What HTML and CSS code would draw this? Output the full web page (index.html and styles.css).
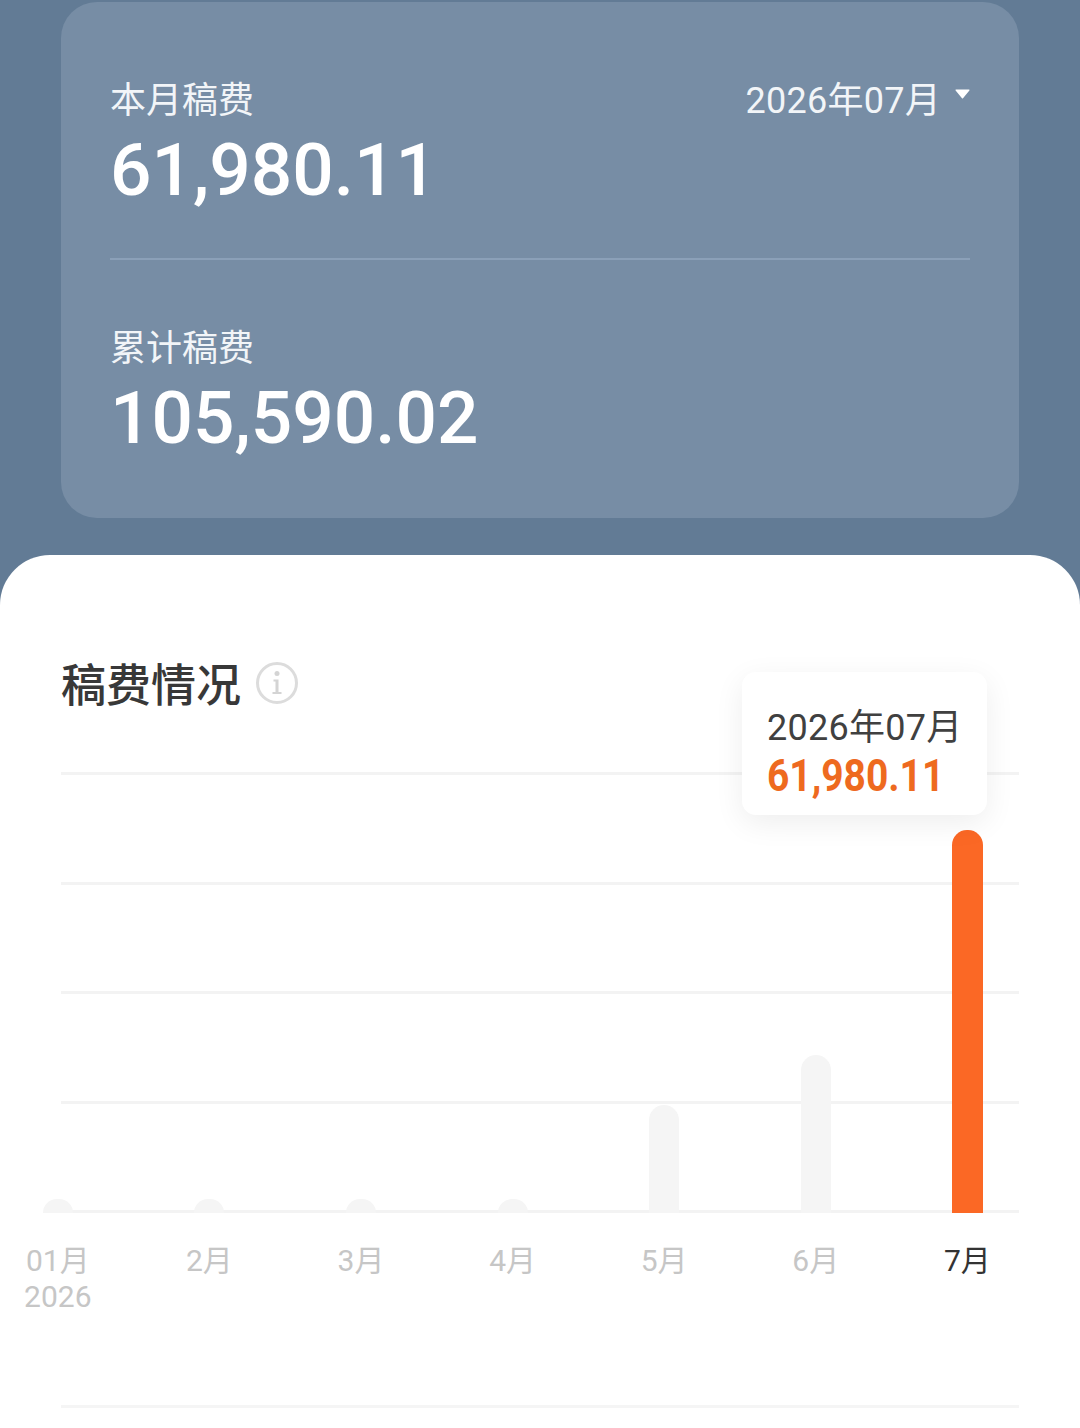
FILE: index.html
```html
<!DOCTYPE html>
<html lang="zh-CN">
<head>
  <meta charset="UTF-8" />
  <meta name="viewport" content="width=device-width, initial-scale=1.0"/>
  <title>稿费情况</title>
  <link rel="stylesheet" href="styles.css">
</head>
<body>

  <section class="summary">
    <div class="summary-top">
      <div>
        <div class="summary-label">本月稿费</div>
        <div class="summary-value">61,980.11</div>
      </div>
      <div class="month-picker">
        <span>2026年07月</span>
        <svg class="caret" width="15" height="10" viewBox="0 0 15 10"><path d="M1.100 0.500H13.900a.6.6 0 0 1 .5 1L8 9.200a.6.6 0 0 1-1 0L.6 1.500a.6.6 0 0 1 .5-1z" fill="#fff"/></svg>
      </div>
    </div>
    <div class="summary-divider"></div>
    <div class="summary-label">累计稿费</div>
    <div class="summary-value">105,590.02</div>
  </section>

  <main class="sheet">
    <div class="sheet-title">
      <h2>稿费情况</h2>
      <svg class="info" width="44" height="44" viewBox="0 0 44 44">
        <circle cx="22" cy="22" r="19.500" fill="none" stroke="#dcdcdc" stroke-width="3"/>
        <circle cx="22" cy="12.500" r="2.500" fill="#d4d4d4"/>
        <path d="M18.500 18.500H23.500V31H26.500V33H17.500V31H20.500V20.500H18.500z" fill="#d4d4d4"/>
      </svg>
    </div>

    <div class="chart">
      <div class="grid-lines">
        <i></i><i></i><i></i><i></i><i></i>
      </div>
      <div class="bars">
        <div class="bar" style="height: 14px"></div>
        <div class="bar" style="height: 14px"></div>
        <div class="bar" style="height: 14px"></div>
        <div class="bar" style="height: 14px"></div>
        <div class="bar" style="height: 108px"></div>
        <div class="bar" style="height: 158px"></div>
        <div class="bar bar-active" style="height: 383px"></div>
      </div>
      <div class="tooltip">
        <div class="tooltip-date">2026年07月</div>
        <div class="tooltip-value">61,980.11</div>
      </div>
    </div>

    <div class="axis">
      <div>01月<br>2026</div>
      <div>2月</div>
      <div>3月</div>
      <div>4月</div>
      <div>5月</div>
      <div>6月</div>
      <div class="axis-active">7月</div>
    </div>

    <div class="sheet-rule"></div>
  </main>

</body>
</html>
```

FILE: styles.css
```css
html, body {
  margin: 0;
  padding: 0;
}

body {
  width: 1080px;
  height: 1428px;
  overflow: hidden;
  background-color: #627b95;
  font-family: Roboto, "Noto Sans CJK SC", sans-serif;
}

.summary {
  height: 516px;
  box-sizing: border-box;
  margin: 2px 61px 0;
  padding: 74px 49px 0;
  background-color: #778da5;
  border-radius: 36px;
  color: #fff;
}

.summary-top {
  display: flex;
  justify-content: space-between;
  align-items: flex-start;
}

.summary-label {
  font-size: 36px;
  line-height: 50px;
  color: #f2f5f8;
}

.summary-value {
  font-size: 73px;
  font-weight: 500;
  line-height: 88px;
}

.month-picker {
  display: flex;
  align-items: flex-start;
  gap: 14px;
  font-size: 36px;
  line-height: 50px;
  letter-spacing: 0.250px;
  color: #f2f5f8;
}

.caret {
  margin-top: 13px;
}

.summary-divider {
  height: 2px;
  margin: 44px 0 64px;
  background-color: #8ba0b8;
}

.sheet {
  height: 873px;
  box-sizing: border-box;
  margin-top: 37px;
  padding: 102px 61px 0;
  background-color: #fff;
  border-radius: 50px 50px 0 0;
}

.sheet-title {
  display: flex;
  align-items: center;
  gap: 14px;
  height: 60px;
}

.sheet-title h2 {
  margin: 0;
  font-size: 45px;
  font-weight: 500;
  line-height: 60px;
  color: #383838;
}

.info {
  margin-top: -8px;
}

.chart {
  position: relative;
  height: 441px;
  margin-top: 55px;
}

.grid-lines {
  position: absolute;
  inset: 0;
  display: flex;
  flex-direction: column;
  justify-content: space-between;
}

.grid-lines i {
  display: block;
  height: 3px;
  background-color: #f3f3f3;
}

.bars,
.axis {
  display: grid;
  grid-template-columns: repeat(7, 151.6px);
  margin-left: -79px;
  justify-items: center;
}

.bars {
  position: relative;
  height: 100%;
  align-items: end;
}

.bar {
  width: 30px;
  background-color: #f5f5f5;
  border-radius: 15px 15px 0 0;
}

.bar-active {
  width: 31px;
  background-color: #fb6825;
}

.tooltip {
  position: absolute;
  top: -100px;
  right: 32px;
  width: 245px;
  height: 143px;
  box-sizing: border-box;
  padding: 31px 0 0 25px;
  background-color: #fff;
  border-radius: 14px;
  box-shadow: 0 8px 30px rgba(0, 0, 0, 0.07);
}

.tooltip-date {
  font-size: 36px;
  line-height: 50px;
  letter-spacing: 0.250px;
  color: #404040;
}

/* the value is set in a condensed face in the app, roboto is squeezed to fit */
.tooltip-value {
  font-size: 44px;
  font-weight: 700;
  line-height: 46px;
  color: #ee6a1f;
  transform: scaleX(0.885);
  transform-origin: left center;
}

.axis {
  padding-top: 30px;
  height: 72px;
  font-size: 30px;
  line-height: 36px;
  text-align: center;
  color: #c6c6c6;
}

.axis-active {
  color: #333;
}

.sheet-rule {
  height: 3px;
  margin-top: 90px;
  background-color: #f5f5f5;
}
```
